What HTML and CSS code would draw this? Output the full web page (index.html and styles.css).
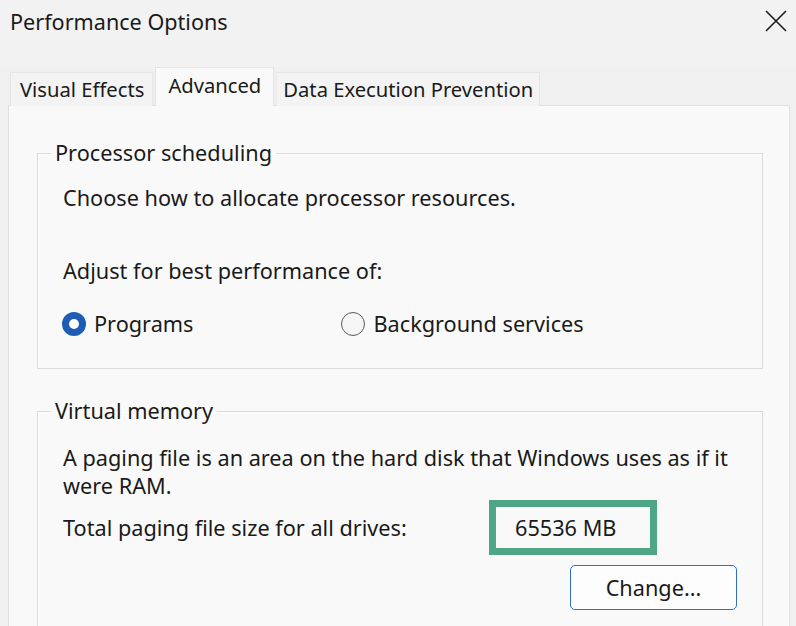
FILE: index.html
```html
<!DOCTYPE html>
<html>
<head>
<meta charset="utf-8">
<link rel="stylesheet" href="styles.css">
</head>
<body>
<div class="window">
  <header class="titlebar">
    <span class="title">Performance Options</span>
    <svg class="close" width="22" height="22" viewBox="0 0 22 22"><path d="M1 1L21 21M21 1L1 21" stroke="#1a1a1a" stroke-width="1.6" fill="none"/></svg>
  </header>
  <nav class="tabs">
    <div class="tab">Visual Effects</div>
    <div class="tab active">Advanced</div>
    <div class="tab dep">Data Execution Prevention</div>
  </nav>
  <main class="panel">
    <fieldset class="group group-proc">
      <legend>Processor scheduling</legend>
      <p class="line">Choose how to allocate processor resources.</p>
      <p class="line adjust">Adjust for best performance of:</p>
      <div class="radios">
        <label class="radio checked"><span class="dot"></span>Programs</label>
        <label class="radio"><span class="dot"></span>Background services</label>
      </div>
    </fieldset>
    <fieldset class="group group-vm">
      <legend>Virtual memory</legend>
      <p class="line">A paging file is an area on the hard disk that Windows uses as if it<br>were RAM.</p>
      <div class="size-row">
        <span class="size-label">Total paging file size for all drives:</span>
        <span class="size-box">65536 MB</span>
      </div>
      <div class="btn-row">
        <button class="btn">Change...</button>
      </div>
    </fieldset>
  </main>
</div>
</body>
</html>
```
FILE: styles.css
```css
* { box-sizing: border-box; }
html, body {
  margin: 0;
  padding: 0;
  background: #f0f0f0;
  width: 796px;
  height: 626px;
  overflow: hidden;
}
body {
  font-family: "Noto Sans", "Open Sans", sans-serif;
  font-size: 21.7px;
  color: #1a1a1a;
}
.window {
  display: flex;
  flex-direction: column;
}
.titlebar {
  height: 67px;
  display: flex;
  align-items: flex-start;
  justify-content: space-between;
  padding: 6px 9px 0 10px;
  background: #f2f2f2;
}
.title {
  font-size: 21.6px;
  line-height: 32px;
}
.close {
  margin-top: 4px;
}
.tabs {
  display: flex;
  align-items: flex-end;
  padding-left: 10px;
  gap: 2px;
  height: 39px;
  position: relative;
  z-index: 1;
  margin-bottom: -1px;
  font-size: 20.2px;
}
.tab {
  height: 34px;
  line-height: 32px;
  padding: 0 8px 0 9px;
  background: #f3f3f3;
  border: 1px solid #e6e6e6;
  border-bottom: none;
}
.tab.active {
  height: 39px;
  line-height: 34px;
  padding: 0 12px;
  background: #f9f9f9;
  border-color: #e3e3e3;
}
.tab.dep {
  padding: 0 6px 0 6px;
}
.panel {
  margin: 0 6px 0 8px;
  background: #f9f9f9;
  border: 1px solid #e0e0e0;
  padding: 35px 26px 0 28px;
  height: 600px;
}
.group {
  margin: 0;
  padding: 19px 25px 30px 25px;
  border: 1px solid #dadada;
  box-shadow: inset 1px 1px 0 #ffffff;
}
.group legend {
  margin-left: -12px;
  padding: 0 4px;
  line-height: 24px;
}
.group-vm {
  margin-top: 30px;
  padding-top: 21px;
}
.line {
  margin: 0;
  line-height: 28px;
}
.adjust {
  margin-top: 45px;
}
.radios {
  display: flex;
  margin-top: 25px;
  height: 28px;
  align-items: center;
}
.radio {
  display: flex;
  align-items: center;
  gap: 8px;
  line-height: 28px;
}
.radio + .radio {
  margin-left: 149px;
}
.dot {
  width: 24px;
  height: 24px;
  border-radius: 50%;
  border: 1.5px solid #5a5a5a;
  background: #f5f5f5;
  margin-left: -1px;
}
.radio.checked .dot {
  border: 7px solid #1f5cb3;
  background: #ffffff;
}
.size-row {
  display: flex;
  align-items: center;
}
.size-label {
  width: 426px;
  line-height: 28px;
}
.size-box {
  width: 168px;
  height: 55px;
  border: 7px solid #4ea687;
  padding-left: 19px;
  line-height: 41px;
}
.btn-row {
  display: flex;
  justify-content: flex-end;
  margin-top: 10px;
}
.btn {
  width: 167px;
  height: 45px;
  font: inherit;
  color: #1a1a1a;
  background: #fdfdfd;
  border: 1.5px solid #2f6fc4;
  border-radius: 5px;
  padding: 0;
}
```
